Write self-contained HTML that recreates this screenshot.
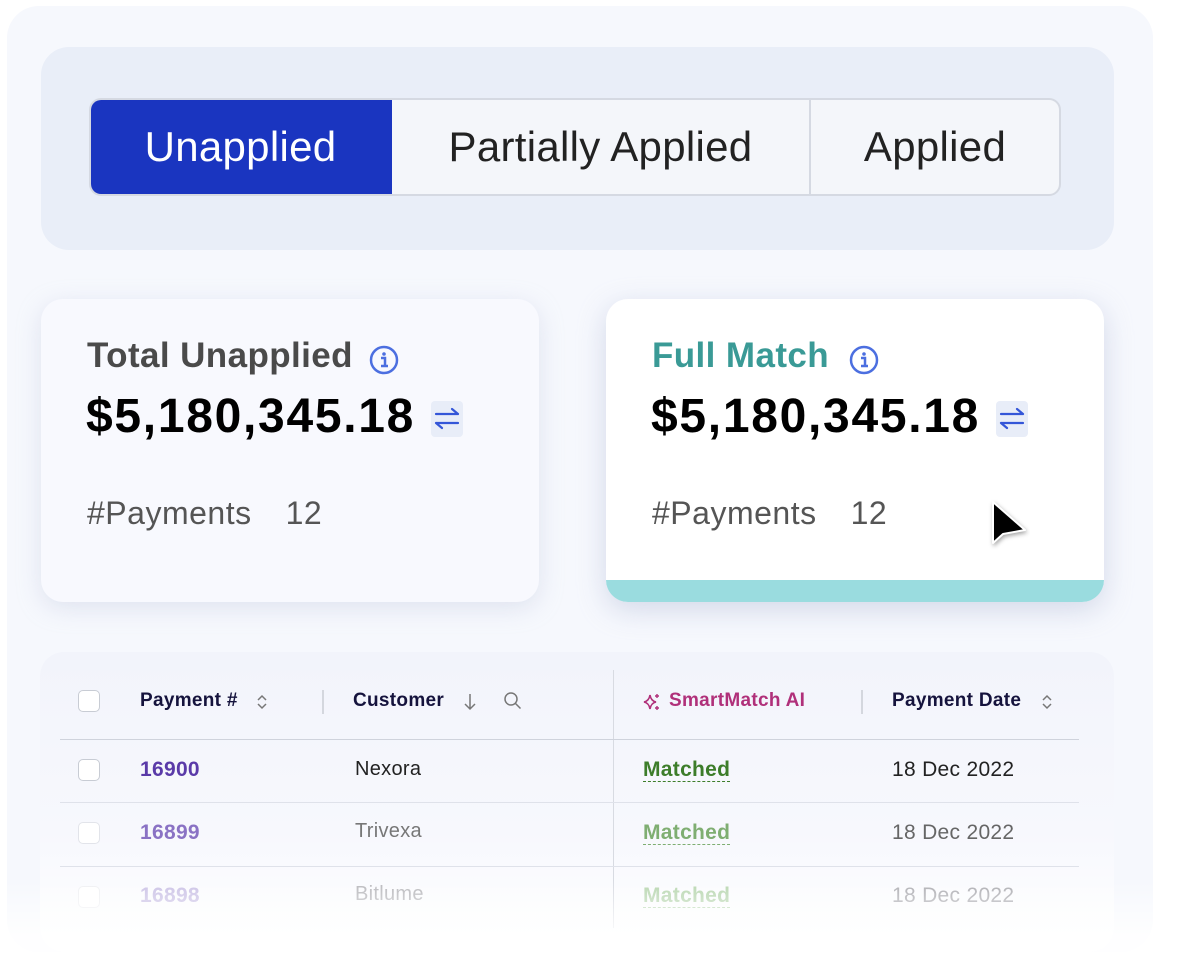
<!DOCTYPE html>
<html><head><meta charset="utf-8"><style>
*{box-sizing:border-box;margin:0;padding:0}
body{width:1189px;height:962px;background:#fff;font-family:"Liberation Sans",sans-serif;position:relative;overflow:hidden}
.outer{position:absolute;left:7px;top:6px;width:1146px;height:946px;background:#f6f8fd;border-radius:32px}
.tog{position:absolute;left:41px;top:47px;width:1073px;height:203px;background:#e9eef8;border-radius:28px}
.tabs{position:absolute;left:89px;top:98px;width:972px;height:98px;border:2px solid #d5d9e2;border-radius:12px;background:#f4f6fa;display:flex;overflow:hidden}
.tabs div{display:flex;align-items:center;justify-content:center;font-size:42px;color:#222;letter-spacing:.3px}
.t1{width:303px;background:#1a35c0;color:#fff!important;margin:-2px 0 -2px -2px}
.t2{width:419px;border-right:2px solid #d5d9e2}
.t3{flex:1}
.card{position:absolute;top:299px;width:498px;height:303px;border-radius:22px;overflow:hidden}
.c1{left:41px;background:#f8f9fe;box-shadow:0 6px 24px rgba(180,190,215,.35)}
.c2{left:606px;background:#fff;box-shadow:0 8px 28px rgba(170,180,210,.45)}
.c2 .band{position:absolute;left:0;right:0;bottom:0;height:22px;background:#9adcdf}
.ttl{position:absolute;left:46px;top:37px;font-size:35px;font-weight:bold;color:#4a4a4a;letter-spacing:.4px}
.amt{position:absolute;left:45px;top:90px;font-size:48px;font-weight:bold;color:#000;letter-spacing:1.7px}
.pay{position:absolute;left:46px;top:196px;font-size:32px;color:#555;letter-spacing:.5px}
.pay span{margin-left:34px}
.info{position:absolute;top:46px;width:30px;height:30px}
.swap{position:absolute;top:102px;width:32px;height:36px;background:#e8edf8;border-radius:4px}
.tbl{position:absolute;left:40px;top:652px;width:1074px;height:300px;border-radius:24px;background:linear-gradient(#f2f4fb,#f7f8fd 60%,#fff)}
.th{position:absolute;top:690px;font-size:19px;font-weight:bold;color:#15133d;letter-spacing:.3px}
.td{position:absolute;font-size:21px;letter-spacing:.3px}
.cb{position:absolute;left:78px;width:22px;height:22px;border:1.5px solid #c8ccd4;border-radius:5px;background:#fff}
.hl{position:absolute;height:1px;left:60px;width:1019px;background:#dfe2ea}
.vl{position:absolute;width:2px;background:#d4d7de}
.m{text-decoration:underline dashed;text-underline-offset:5px;text-decoration-thickness:1px;font-weight:bold}
.fade{position:absolute;left:0;top:880px;width:1189px;height:82px;background:linear-gradient(rgba(255,255,255,0),rgba(255,255,255,.9) 70%)}
</style></head><body>
<div class="outer"></div>
<div class="tog"></div>
<div class="tabs"><div class="t1">Unapplied</div><div class="t2">Partially Applied</div><div class="t3">Applied</div></div>

<div class="card c1">
<div class="ttl">Total Unapplied</div>
<svg class="info" style="left:328px" viewBox="0 0 30 30"><circle cx="15" cy="15" r="13" fill="none" stroke="#4c6fe0" stroke-width="2.5"/><circle cx="15" cy="9" r="1.8" fill="#4c6fe0"/><path d="M12 13h4v8M12 21h7" stroke="#4c6fe0" stroke-width="2.5" fill="none"/></svg>
<div class="amt">$5,180,345.18</div>
<div class="swap" style="left:390px"><svg width="32" height="36" viewBox="0 0 32 36"><path d="M5 13h22M21 8l6 5M27 22H5M11 27l-6-5" stroke="#3456d8" stroke-width="2.2" fill="none" stroke-linecap="round"/></svg></div>
<div class="pay">#Payments<span>12</span></div>
</div>

<div class="card c2">
<div class="ttl" style="color:#3a9a96">Full Match</div>
<svg class="info" style="left:243px" viewBox="0 0 30 30"><circle cx="15" cy="15" r="13" fill="none" stroke="#4c6fe0" stroke-width="2.5"/><circle cx="15" cy="9" r="1.8" fill="#4c6fe0"/><path d="M12 13h4v8M12 21h7" stroke="#4c6fe0" stroke-width="2.5" fill="none"/></svg>
<div class="amt">$5,180,345.18</div>
<div class="swap" style="left:390px"><svg width="32" height="36" viewBox="0 0 32 36"><path d="M5 13h22M21 8l6 5M27 22H5M11 27l-6-5" stroke="#3456d8" stroke-width="2.2" fill="none" stroke-linecap="round"/></svg></div>
<div class="pay">#Payments<span>12</span></div>
<svg style="position:absolute;left:382px;top:198px" width="42" height="54" viewBox="0 0 42 54"><path d="M5 5L5 46L15 37L37 33Z" fill="#000" stroke="#fff" stroke-width="2" stroke-linejoin="round" filter="drop-shadow(1px 2px 2px rgba(0,0,0,.35))"/></svg>
<div class="band"></div>
</div>

<div class="tbl"></div>
<div class="cb" style="top:690px"></div>
<div class="th" style="left:140px">Payment #</div>
<svg style="position:absolute;left:256px;top:693px" width="12" height="18" viewBox="0 0 12 18"><path d="M2 7l4-4 4 4M2 11l4 4 4-4" stroke="#777" stroke-width="1.5" fill="none"/></svg>
<div class="vl" style="left:322px;top:690px;height:24px"></div>
<div class="th" style="left:353px">Customer</div>
<svg style="position:absolute;left:462px;top:692px" width="16" height="20" viewBox="0 0 16 20"><path d="M8 2v15M3 12l5 5 5-5" stroke="#777" stroke-width="1.5" fill="none"/></svg>
<svg style="position:absolute;left:503px;top:691px" width="20" height="20" viewBox="0 0 20 20"><circle cx="8" cy="8" r="6" stroke="#777" stroke-width="1.5" fill="none"/><path d="M12.5 12.5l5 5" stroke="#777" stroke-width="1.5"/></svg>
<div class="vl" style="left:613px;top:670px;height:258px;width:1px;background:#d8dbe2"></div>
<svg style="position:absolute;left:642px;top:692px" width="20" height="20" viewBox="0 0 20 20"><path d="M8 3Q9 9 14 10Q9 11 8 17Q7 11 2 10Q7 9 8 3Z" stroke="#b0307a" stroke-width="1.6" fill="none"/><path d="M15 2v4M13 4h4M15 14v4M13 16h4" stroke="#b0307a" stroke-width="1.4"/></svg>
<div class="th" style="left:669px;color:#b0307a">SmartMatch AI</div>
<div class="vl" style="left:861px;top:690px;height:24px"></div>
<div class="th" style="left:892px">Payment Date</div>
<svg style="position:absolute;left:1041px;top:693px" width="12" height="18" viewBox="0 0 12 18"><path d="M2 7l4-4 4 4M2 11l4 4 4-4" stroke="#777" stroke-width="1.5" fill="none"/></svg>
<div class="hl" style="top:739px;background:#cfd3dc"></div>

<div class="cb" style="top:759px"></div>
<div class="td" style="left:140px;top:758px;color:#5a3aa8;font-weight:bold">16900</div>
<div class="td" style="left:355px;top:758px;color:#222;font-size:20px">Nexora</div>
<div class="td m" style="left:643px;top:758px;color:#3d7d2a">Matched</div>
<div class="td" style="left:892px;top:758px;color:#222">18 Dec 2022</div>
<div class="hl" style="top:802px"></div>

<div class="cb" style="top:822px;border-color:#e2e4ea"></div>
<div class="td" style="left:140px;top:821px;color:#8a72c4;font-weight:bold">16899</div>
<div class="td" style="left:355px;top:820px;color:#777;font-size:20px">Trivexa</div>
<div class="td m" style="left:643px;top:821px;color:#7fae72">Matched</div>
<div class="td" style="left:892px;top:821px;color:#666">18 Dec 2022</div>
<div class="hl" style="top:866px"></div>

<div class="cb" style="top:886px;border-color:#eff0f3"></div>
<div class="td" style="left:140px;top:884px;color:#cbc2e6;font-weight:bold">16898</div>
<div class="td" style="left:355px;top:883px;color:#b8b8bc;font-size:20px">Bitlume</div>
<div class="td m" style="left:643px;top:884px;color:#b8d6b0">Matched</div>
<div class="td" style="left:892px;top:884px;color:#adadb2">18 Dec 2022</div>
<div class="fade"></div>
</body></html>
